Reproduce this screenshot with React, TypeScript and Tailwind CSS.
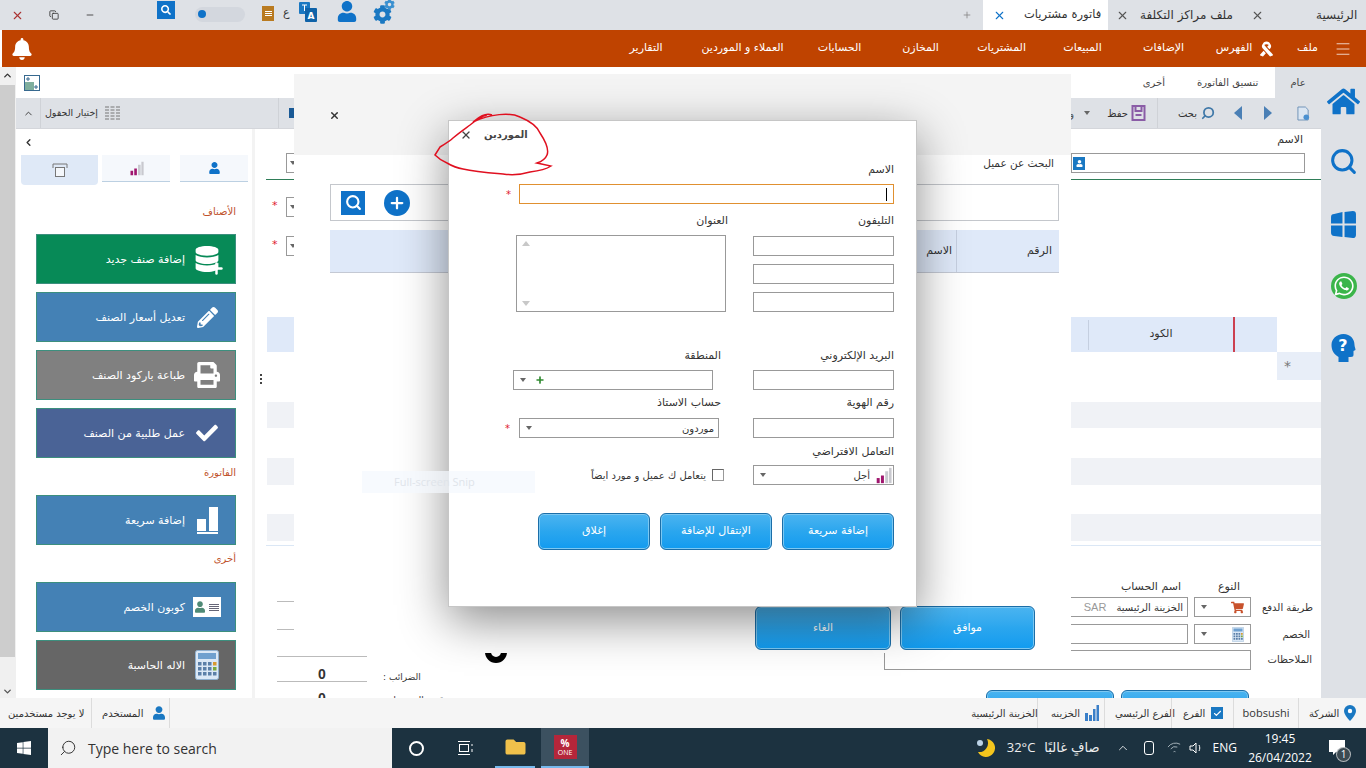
import { ReactNode } from 'react';
import { X, Plus, Menu, ChevronUp, ChevronDown, ChevronLeft, Search, Check, Copy, Minus } from 'lucide-react';
import { FaBell, FaCog, FaUser, FaHome, FaWhatsapp, FaDatabase, FaPencilAlt, FaPrint, FaCheck, FaWindows, FaRibbon, FaShoppingCart, FaSearch, FaFolder } from 'react-icons/fa';

const MENU = ['الفهرس', 'الإضافات', 'المبيعات', 'المشتريات', 'المخازن', 'الحسابات', 'العملاء و الموردين', 'التقارير'];

function Bars({ className = '' }: { className?: string }) {
  return (
    <svg viewBox="0 0 20 20" className={className}>
      <rect x="2" y="13" width="3.5" height="6" fill="#a0166e" />
      <rect x="7" y="10" width="3.5" height="9" fill="#a0166e" />
      <rect x="12" y="5" width="3.5" height="14" fill="#c9c9cf" />
      <rect x="16.5" y="1" width="3" height="18" fill="#c9c9cf" />
    </svg>
  );
}

function Calc({ className = '' }: { className?: string }) {
  return (
    <svg viewBox="0 0 24 30" className={className}>
      <rect x="0.5" y="0.5" width="23" height="29" rx="2" fill="#dbe8f6" stroke="#8fb0d0" />
      <rect x="3" y="3" width="18" height="6" fill="#6fa0cf" />
      {[12, 17, 22].map((y) => [3, 8, 13, 18].map((x) => (
        <rect key={`${x}-${y}`} x={x} y={y} width="3.5" height="3.5" fill={x === 18 && y === 12 ? '#d89a30' : x === 18 && y === 17 ? '#7aa83a' : '#5b7fa8'} />
      )))}
    </svg>
  );
}

function Caret() {
  return <span className="w-0 h-0 border-x-[3px] border-x-transparent border-t-[4px] border-t-[#666]" />;
}

function Lbl({ children, right = 0 }: { children: ReactNode; right?: number }) {
  return (
    <div className="flex justify-end h-[16px] items-center text-[11px] text-[#333] whitespace-nowrap" style={{ paddingRight: right }}>
      {children}
    </div>
  );
}

function Box({ className = '', children }: { className?: string; children?: ReactNode }) {
  return <div className={`h-[20px] border border-[#999] bg-white flex items-center ${className}`}>{children}</div>;
}

function BlueBtn({ label, className = '' }: { label: string; className?: string }) {
  return (
    <div className={`rounded-[6px] border border-[#1b6ea8] bg-gradient-to-b from-[#4ab4f0] via-[#2aa6ee] to-[#0f9bf0] shadow-[inset_0_0_0_1px_#7cc8f2] flex items-center justify-center text-white text-[11px] ${className}`}>
      {label}
    </div>
  );
}

function SideBtn({ label, color, icon }: { label: string; color: string; icon: ReactNode }) {
  return (
    <div className={`w-[200px] h-[50px] border border-[#3c8f7e] flex items-center justify-end gap-[7px] pr-[13px] text-white text-[11px] shrink-0 ${color}`}>
      <span className="whitespace-nowrap pt-[3px]">{label}</span>
      <span className="w-[30px] h-[30px] flex items-center justify-center">{icon}</span>
    </div>
  );
}

function SectionTitle({ children, className = '' }: { children: ReactNode; className?: string }) {
  return <div className={`w-[200px] text-right text-[10px] text-[#c0522a] ${className}`}>{children}</div>;
}

function TopBar() {
  return (
    <div className="h-[30px] bg-[#dee1e6] flex items-center shrink-0 relative">
      <X className="w-[13px] h-[13px] text-[#a33] ml-[11px]" />
      <Copy className="w-[10px] h-[10px] text-[#333] ml-[25px]" />
      <Minus className="w-[10px] h-[10px] text-[#333] ml-[26px]" />
      <span className="w-[18px] h-[18px] ml-[62px] -mt-[10px] bg-[#0f72c8] flex items-center justify-center">
        <FaSearch className="w-[10px] h-[10px] text-white" />
      </span>
      <span className="w-[50px] h-[15px] rounded-full bg-[#d3d7de] ml-[20px] flex items-center pl-[3px] -mt-[2px]">
        <span className="w-[8px] h-[8px] rounded-full bg-[#0f72c8]" />
      </span>
      <span className="w-[12px] h-[15px] bg-[#b97a20] ml-[17px] -mt-[4px] flex flex-col items-center justify-center gap-[1px]">
        <span className="w-[7px] h-px bg-white" />
        <span className="w-[7px] h-px bg-white" />
        <span className="w-[7px] h-px bg-white" />
      </span>
      <span className="text-[11px] text-[#333] ml-[9px] -mt-[4px]">ع</span>
      <svg viewBox="0 0 18 20" className="w-[18px] h-[20px] ml-[9px] -mt-[6px]">
        <rect x="0" y="0" width="11" height="12" rx="1" fill="#1a78c2" />
        <rect x="6" y="6" width="12" height="14" rx="1" fill="#0f62a8" />
        <path d="M3 3h5M5.5 3v6" stroke="#fff" />
        <text x="12" y="17" textAnchor="middle" fontSize="9" fontWeight="bold" fill="#fff">A</text>
      </svg>
      <FaUser className="w-[20px] h-[21px] text-[#0f72c8] ml-[20px] -mt-[8px]" />
      <span className="relative ml-[16px] -mt-[5px] w-[22px] h-[22px]">
        <FaCog className="w-[19px] h-[19px] text-[#1a78c2] absolute left-0 bottom-0" />
        <FaCog className="w-[11px] h-[11px] text-[#3a90d0] absolute right-0 -top-[3px]" />
      </span>
      <div className="ml-auto flex items-center h-full text-[12px] text-[#333]">
        <Plus className="w-[10px] h-[10px] text-[#888] mr-[11px]" />
        <div className="w-[125px] h-[30px] bg-white flex items-center pl-[10px]">
          <X className="w-[13px] h-[13px] text-[#0f72c8]" />
          <span className="ml-[18px] whitespace-nowrap text-[11.5px]">فاتورة مشتريات</span>
        </div>
        <X className="w-[13px] h-[13px] text-[#555] ml-[8px]" />
        <span className="ml-[8px] whitespace-nowrap w-[96px] text-right">ملف مراكز التكلفة</span>
        <X className="w-[13px] h-[13px] text-[#555] ml-[18px]" />
        <span className="ml-[52px] mr-[10px] whitespace-nowrap w-[40px] text-right">الرئيسية</span>
      </div>
    </div>
  );
}

function NavBar() {
  return (
    <div className="h-[37px] ml-[2px] bg-[#bf4300] flex items-center text-white text-[11px] shrink-0">
      <FaBell className="w-[20px] h-[22px] ml-[10px]" />
      <div dir="rtl" className="ml-auto flex items-center">
        <Menu strokeWidth={1} className="w-[18px] h-[18px] mr-[14px]" />
        <span className="mr-[16px]">ملف</span>
        <FaRibbon className="w-[13px] h-[16px] mr-[24px]" />
        {MENU.map((m, i) => (
          <span key={m} className={`whitespace-nowrap text-center ${i === 0 ? 'w-[60px] mr-[-4px]' : i === 6 ? 'w-[113px]' : i === 7 ? 'w-[80px]' : 'w-[81px]'}`}>
            {m}
          </span>
        ))}
        <span className="w-[26px]" />
      </div>
    </div>
  );
}

function RibbonRows() {
  return (
    <>
      <div className="h-[31px] bg-white flex items-center shrink-0 text-[10px] text-[#444]">
        <svg viewBox="0 0 16 16" className="w-[16px] h-[16px] ml-[8px]">
          <rect x="0.5" y="0.5" width="15" height="15" fill="#fff" stroke="#37698f" />
          <rect x="1" y="7" width="9" height="8" fill="#7fae9d" />
          <path d="M4 2v4M2 4h4M12 10v4M10 12h4" stroke="#37698f" />
        </svg>
        <div className="ml-auto flex items-center h-full">
          <span className="mr-[32px]">أخرى</span>
          <span className="mr-[18px] w-[60px] text-center whitespace-nowrap">تنسيق الفاتورة</span>
          <span className="w-[46px] h-full bg-[#dee1e6] flex items-center justify-center">عام</span>
        </div>
      </div>
      <div className="h-[31px] bg-[#dee1e6] border-b border-[#d4d6db] flex items-center shrink-0 text-[10px] text-[#333]">
        <div className="w-[25px] h-full border-r border-[#cfd2d7] flex items-center justify-center">
          <ChevronUp className="w-[11px] h-[11px]" />
        </div>
        <span className="ml-[9px] w-[48px] text-[9.5px] flex justify-end whitespace-nowrap">إختيار الحقول</span>
        <svg viewBox="0 0 15 14" className="ml-[7px] w-[15px] h-[14px]" stroke="#777">
          {[1, 4, 7, 10, 13].map((y) => <path key={y} d="M0 0h4M5.5 0h4M11 0h4" transform={`translate(0 ${y})`} />)}
        </svg>
        <div className="ml-[158px] w-px h-full bg-[#cfd2d7]" />
        <span className="ml-[10px] w-[5px] h-[10px] bg-[#1a5a96]" />
        <div className="ml-auto flex items-center h-full">
          <span className="mr-[10px] text-[#555]">و</span>
          <Caret />
          <span className="ml-[17px] whitespace-nowrap">حفظ</span>
          <svg viewBox="0 0 14 16" className="ml-[3px] w-[15px] h-[16px]" fill="none" stroke="#8a5ca6" strokeWidth="2">
            <path d="M1 1h12v14H1zM4 1v5h6V1M4 10h6" />
          </svg>
          <div className="ml-[11px] w-px h-full bg-[#cfd2d7]" />
          <span className="ml-[20px] whitespace-nowrap">بحث</span>
          <Search className="w-[14px] h-[14px] text-[#3f78a8] -scale-x-100 ml-[4px]" strokeWidth={3} />
          <span className="ml-[19px] w-0 h-0 border-y-[7px] border-y-transparent border-r-[8px] border-r-[#4a7fb5]" />
          <span className="ml-[22px] w-0 h-0 border-y-[7px] border-y-transparent border-l-[8px] border-l-[#4a7fb5]" />
          <svg viewBox="0 0 14 16" className="w-[13px] h-[15px] ml-[25px] mr-[11px]">
            <path d="M1 1h8l3 3v11H1z" fill="#dbe6f2" stroke="#6a8fb5" />
            <circle cx="10" cy="12" r="3" fill="#4a90d0" />
          </svg>
        </div>
      </div>
    </>
  );
}

function SidePanel() {
  return (
    <div className="w-[239px] h-full shrink-0 bg-[#f3f3f3] pr-[3px] overflow-hidden">
      <div className="h-full bg-white pl-[4px] pr-[1px] flex flex-col">
        <div className="h-[26px] flex items-center pl-[3px] shrink-0">
          <ChevronLeft className="w-[11px] h-[11px] text-[#333]" strokeWidth={3} />
        </div>
        <div className="flex shrink-0 h-[30px] items-start pl-[1px]">
          <div className="w-[77px] h-[30px] bg-[#dfe9f7] rounded-b-[4px] flex items-center justify-center">
            <svg viewBox="0 0 16 14" className="w-[16px] h-[14px]" fill="none" stroke="#777">
              <path d="M1 5V1h14v4" />
              <rect x="3.5" y="4.5" width="9" height="9" fill="#f4f7fb" />
            </svg>
          </div>
          <div className="w-[68px] h-[27px] ml-[4px] bg-[#f5f8fc] border-b border-[#bcd0e2] flex items-center justify-center">
            <Bars className="w-[15px] h-[15px]" />
          </div>
          <div className="w-[68px] h-[27px] ml-[10px] bg-[#f5f8fc] border-b border-[#bcd0e2] flex items-center justify-center">
            <FaUser className="w-[11px] h-[12px] text-[#0f72c8]" />
          </div>
        </div>
        <div className="pl-[16px] flex flex-col">
          <SectionTitle className="mt-[19px] mb-[15px]">الأصناف</SectionTitle>
          <div className="flex flex-col gap-[8px]">
            <SideBtn label="إضافة صنف جديد" color="bg-[#078a57]" icon={
              <span className="relative">
                <FaDatabase className="w-[24px] h-[26px]" />
                <Plus className="absolute -right-[6px] -bottom-[5px] w-[17px] h-[17px]" strokeWidth={3.5} />
              </span>
            } />
            <SideBtn label="تعديل أسعار الصنف" color="bg-[#4481b5]" icon={<FaPencilAlt className="w-[21px] h-[21px]" />} />
            <SideBtn label="طباعة باركود الصنف" color="bg-[#808080]" icon={<FaPrint className="w-[28px] h-[26px]" />} />
            <SideBtn label="عمل طلبية من الصنف" color="bg-[#4a6396]" icon={<FaCheck className="w-[26px] h-[22px]" />} />
          </div>
          <SectionTitle className="mt-[7px] mb-[15px]">الفاتورة</SectionTitle>
          <SideBtn label="إضافة سريعة" color="bg-[#4481b5]" icon={
            <span className="flex items-end gap-[3px] border-b-2 border-white pb-[1px]">
              <span className="w-[9px] h-[12px] bg-white" />
              <span className="w-[9px] h-[24px] bg-white" />
            </span>
          } />
          <SectionTitle className="mt-[6px] mb-[16px]">أخرى</SectionTitle>
          <div className="flex flex-col gap-[8px]">
            <SideBtn label="كوبون الخصم" color="bg-[#4481b5]" icon={
              <span className="w-[28px] h-[20px] bg-white flex items-center justify-between px-[2px]">
                <FaUser className="w-[10px] h-[12px] text-[#4f8a76]" />
                <span className="w-[10px] flex flex-col gap-[1px]"><span className="h-px bg-[#667]" /><span className="h-px bg-[#667]" /><span className="h-px bg-[#667]" /><span className="h-px bg-[#667]" /></span>
              </span>
            } />
            <SideBtn label="الاله الحاسبة" color="bg-[#666666]" icon={<Calc className="w-[24px] h-[30px]" />} />
            <SideBtn label="" color="bg-[#078a57]" icon={null} />
          </div>
        </div>
      </div>
    </div>
  );
}

function MainArea() {
  return (
    <div className="flex-1 min-w-0 h-full overflow-hidden flex flex-col text-[11px] text-[#333]">
      <div className="h-[51px] border-b border-[#2f7d58] shrink-0 pr-[16px] pl-[20px] flex items-end justify-between">
        <Box className="w-[30px] h-[19px] pl-[3px] mb-[6px]"><Caret /></Box>
        <div className="flex flex-col items-end">
          <div className="h-[26px] flex items-center pr-[2px] tracking-wide">الاسم</div>
          <Box className="w-[234px] h-[18px] mb-[6px] pl-0">
            <span className="w-[12px] h-[13px] bg-[#1a78c2] flex items-center justify-center ml-px"><FaUser className="w-[7px] h-[7px] text-white" /></span>
          </Box>
        </div>
      </div>
      <div className="flex items-center mt-[17px] h-[19px] shrink-0 pl-[6px]">
        <span className="text-[#e02030] text-[11px]">*</span>
        <Box className="ml-[8px] w-[30px] h-[19px] pl-[3px]"><Caret /></Box>
      </div>
      <div className="flex items-center mt-[20px] h-[19px] shrink-0 pl-[6px]">
        <span className="text-[#e02030] text-[11px]">*</span>
        <Box className="ml-[8px] w-[30px] h-[19px] pl-[3px]"><Caret /></Box>
      </div>
      <div className="mt-[62px] h-[35px] w-[1010px] ml-px shrink-0 bg-[#dfe9f9] flex items-center">
        <span className="flex-1" />
        <span className="w-px h-[30px] bg-[#c5cfe0]" />
        <span className="w-[144px] text-center whitespace-nowrap">الكود</span>
        <span className="w-[2px] h-full bg-[#cc4050] mr-[42px]" />
      </div>
      <div className="h-[28px] flex justify-end shrink-0">
        <span className="w-[44px] bg-[#e8eef8] flex items-center pl-[7px] text-[#777] text-[14px]">*</span>
      </div>
      <div className="mt-[22px] h-[26px] ml-px bg-[#f0f2f6] shrink-0" />
      <div className="mt-[30px] h-[27px] ml-px bg-[#f0f2f6] shrink-0" />
      <div className="mt-[29px] h-[27px] ml-px bg-[#f0f2f6] shrink-0" />
      <div className="mt-[4px] h-px bg-[#dbe7f5] shrink-0" />
      <div className="flex shrink-0 justify-between">
        <div className="flex">
          <div className="ml-[11px] w-[90px] pt-[29px] text-center font-bold text-[14px] font-['Liberation_Sans',sans-serif]">
            <div className="h-[27px] border-b border-[#bbb]" />
            <div className="h-[28px] border-b border-[#bbb]" />
            <div className="h-[27px] border-b border-[#bbb]" />
            <div className="h-[25px] border-b border-[#bbb] pt-[10px] leading-none">0</div>
            <div className="h-[20px] pt-[9px] leading-none">0</div>
          </div>
          <div className="ml-[16px] w-[60px] mt-[125px] text-[9px] whitespace-nowrap flex flex-col items-start">
            <span dir="rtl">الضرائب :</span>
            <span dir="rtl" className="mt-[9px] ml-[9px]">قيمة التقسيط</span>
          </div>
          <div className="ml-[42px] mt-[95px] w-[22px] h-[22px] rounded-full border-[6px] border-black" />
        </div>
        <div className="pr-[9px]">
          <div className="flex h-[16px] mt-[33px] pr-[72px] gap-[37px] text-[11px] justify-end tracking-wide">
            <span>اسم الحساب</span>
            <span>النوع</span>
          </div>
          <div className="flex justify-end items-center mt-[2px] h-[20px] gap-[6px]">
            <Box className="w-[150px] h-[20px] justify-end gap-[10px] pr-[4px] text-[10px]"><span className="text-[#999] font-['Liberation_Sans',sans-serif] text-[11px]">SAR</span><span className="whitespace-nowrap">الخزينة الرئيسية</span></Box>
            <div className="flex items-center gap-[11px]">
              <Box className="w-[57px] h-[20px] justify-between px-[6px]"><Caret /><FaShoppingCart className="w-[13px] h-[13px] text-[#c8522c]" /></Box>
              <span className="w-[50px] text-right text-[10px] whitespace-nowrap">طريقة الدفع</span>
            </div>
          </div>
          <div className="flex justify-end items-center mt-[7px] h-[20px] gap-[6px]">
            <Box className="w-[150px] h-[20px]" />
            <div className="flex items-center gap-[11px]">
              <Box className="w-[57px] h-[20px] justify-between px-[6px]"><Caret /><Calc className="w-[12px] h-[15px]" /></Box>
              <span className="w-[50px] text-right text-[10px] whitespace-nowrap pr-[2px]">الخصم</span>
            </div>
          </div>
          <div className="flex justify-end items-center mt-[6px] h-[19px] gap-[11px]">
            <Box className="w-[367px] h-[19px]" />
            <span className="w-[50px] text-right text-[10px] whitespace-nowrap">الملاحظات</span>
          </div>
          <div className="flex justify-end gap-[7px] mt-[21px] pr-[63px]">
            <BlueBtn label="" className="w-[128px] h-[30px]" />
            <BlueBtn label="" className="w-[128px] h-[30px]" />
          </div>
        </div>
      </div>
    </div>
  );
}

function Rail() {
  return (
    <div className="w-[45px] shrink-0 h-full bg-[#dee1e6] flex flex-col items-center pt-[19px]">
      <FaHome className="w-[33px] h-[31px] text-[#0f72c8]" />
      <Search className="w-[29px] h-[29px] text-[#0f72c8] mt-[30px]" strokeWidth={2.5} />
      <svg viewBox="0 0 24 26" className="w-[25px] h-[27px] mt-[35px] fill-[#0f72c8]">
        <path d="M0 6c0-2 1-3 3-3l8-2v11H0zM13 1l8-1c2 0 3 1 3 3v9H13zM0 14h11v11l-8-1c-2 0-3-1-3-3zM13 14h11v9c0 2-1 3-3 3l-8-1z" />
      </svg>
      <span className="w-[26px] h-[26px] mt-[35px] rounded-full bg-[#3bb54a] flex items-center justify-center">
        <FaWhatsapp className="w-[22px] h-[22px] text-white" />
      </span>
      <svg viewBox="0 0 24 28" className="w-[25px] h-[28px] mt-[35px]">
        <path d="M12 0c7 0 11 5 11 11 0 2 1 3 1 5l-2 1v4c0 2-2 2-5 2v5H7v-5C2 20 0 16 0 11 0 5 5 0 12 0z" fill="#0f72c8" />
        <text x="11.5" y="17" textAnchor="middle" fontSize="16" fontWeight="bold" fill="#fff">?</text>
      </svg>
    </div>
  );
}

function StatusItem({ children, className = '' }: { children: ReactNode; className?: string }) {
  return <div className={`h-full flex items-center gap-[5px] border-l border-[#dcdcdc] whitespace-nowrap ${className}`}>{children}</div>;
}

function StatusBar() {
  return (
    <div className="h-[30px] shrink-0 bg-[#f5f5f5] flex items-center text-[10px] text-[#333]">
      <span className="ml-[8px] w-[83px] whitespace-nowrap">لا يوجد مستخدمين</span>
      <StatusItem className="w-[79px] border-r pl-[10px]">
        المستخدم
        <FaUser className="w-[12px] h-[14px] text-[#1a78c2] ml-[5px]" />
      </StatusItem>
      <div className="ml-auto flex items-center h-full">
        <StatusItem className="w-[66px] justify-center border-l-0 border-r">الخزينة الرئيسية</StatusItem>
        <StatusItem className="pl-[13px] w-[66px] border-l-0">
          الخزينه
          <svg viewBox="0 0 14 16" className="w-[14px] h-[16px] fill-[#3a7fc8]">
            <rect x="0" y="8" width="3" height="8" /><rect x="4" y="10" width="3" height="6" /><rect x="8" y="4" width="2.5" height="12" /><rect x="11.5" y="0" width="2.5" height="16" />
          </svg>
        </StatusItem>
        <StatusItem className="w-[67px] pl-[10px]">الفرع الرئيسي</StatusItem>
        <StatusItem className="w-[59px] pl-[11px] gap-[6px]">
          الفرع
          <span className="w-[12px] h-[12px] bg-[#1a78c2] flex items-center justify-center"><Check className="w-[9px] h-[9px] text-white" strokeWidth={3} /></span>
        </StatusItem>
        <StatusItem className="w-[65px] justify-center text-[11px] font-['Open_Sans',sans-serif] ml-[3px]">bobsushi</StatusItem>
        <StatusItem className="w-[68px] pl-[10px]">
          الشركة
          <svg viewBox="0 0 12 16" className="w-[12px] h-[16px]">
            <path d="M6 0a6 6 0 0 1 6 6c0 4-6 10-6 10S0 10 0 6a6 6 0 0 1 6-6z" fill="#1a78c2" />
            <circle cx="6" cy="6" r="2.2" fill="#fff" />
          </svg>
        </StatusItem>
      </div>
    </div>
  );
}

function TaskBar() {
  return (
    <div className="h-[40px] shrink-0 bg-[#1c3240] flex items-center text-white font-['Open_Sans',sans-serif]">
      <FaWindows className="w-[16px] h-[16px] ml-[16px]" />
      <div className="ml-[16px] w-[344px] h-full bg-[#f2f2f2] flex items-center text-[#333] text-[14px]">
        <Search className="w-[18px] h-[18px] ml-[11px] -scale-x-100" strokeWidth={1.3} />
        <span className="ml-[11px]">Type here to search</span>
      </div>
      <span className="ml-[17px] w-[15px] h-[15px] rounded-full border-2 border-white" />
      <svg viewBox="0 0 16 16" className="w-[16px] h-[16px] ml-[33px]" fill="none" stroke="#fff">
        <rect x="2.5" y="4.5" width="9" height="7" /><path d="M1 1.5h12M1 14.5h12M15 4v2M15 9v3" />
      </svg>
      <div className="ml-[22px] w-[40px] h-full border-b-2 border-[#76b9ed] flex items-center justify-center">
        <FaFolder className="w-[21px] h-[20px] text-[#f0c14b]" />
      </div>
      <div className="ml-[6px] w-[48px] h-full bg-[#3c5160] border-b-2 border-[#76b9ed] flex items-center justify-center">
        <span className="w-[23px] h-[24px] bg-[#b5263a] flex flex-col items-center justify-center text-[7px] leading-[8px]">
          <span className="text-[10px] font-bold leading-[11px]">%</span>ONE
        </span>
      </div>
      <div className="ml-auto flex items-center h-full">
        <svg viewBox="0 0 20 20" className="w-[20px] h-[20px]">
          <path d="M12 1a9 9 0 1 1-9 13A9 9 0 0 0 12 1z" fill="#f4c51d" />
          <circle cx="5" cy="5" r="3" fill="#bcd3e6" />
        </svg>
        <span className="ml-[12px] text-[13px] text-[#eee] whitespace-nowrap">32°C</span>
        <span className="ml-[9px] text-[13px] text-[#eee] whitespace-nowrap tracking-wide font-['DejaVu_Sans',sans-serif]">صافٍ غالبًا</span>
        <ChevronUp className="w-[14px] h-[14px] ml-[16px]" strokeWidth={1.4} />
        <span className="ml-[14px] w-[10px] h-[14px] border border-white rounded-[3px]" />
        <svg viewBox="0 0 16 14" className="w-[15px] h-[14px] ml-[13px]" fill="none" stroke="#aab6be">
          <path d="M1 6a10 10 0 0 1 13-3M4 8a6 6 0 0 1 7-2M7 11a2 2 0 0 1 2 0" />
        </svg>
        <svg viewBox="0 0 14 14" className="w-[14px] h-[14px] ml-[7px]" fill="none" stroke="#fff">
          <path d="M1 5h3l3-3v10l-3-3H1zM10 4c1 2 1 4 0 6" />
        </svg>
        <span className="ml-[10px] text-[12px]">ENG</span>
        <div className="ml-[10px] w-[66px] text-center text-[12px] leading-[19px]">
          <div>19:45</div>
          <div>26/04/2022</div>
        </div>
        <div className="relative ml-[16px] mr-[21px]">
          <svg viewBox="0 0 16 16" className="w-[16px] h-[16px] fill-white"><path d="M0 0h16v12H7l-3 3v-3H0z" /></svg>
          <span className="absolute left-[7px] top-[7px] w-[15px] h-[15px] rounded-full bg-[#3c4a52] border border-white/60 text-[10px] leading-[13px] text-center">1</span>
        </div>
      </div>
    </div>
  );
}

function CustomerDialog() {
  return (
    <div className="absolute left-[294px] top-[74px] w-[777px] h-[579px] bg-white flex flex-col text-[11px] text-[#333]">
      <div className="h-[81px] bg-[#f4f4f4] shrink-0 pl-[35px] pt-[36px]">
        <X className="w-[11px] h-[11px] text-[#333]" strokeWidth={3} />
      </div>
      <div className="text-[10.5px] text-right pr-[17px] h-[29px] pt-[1px] shrink-0">البحث عن عميل</div>
      <div className="ml-[36px] w-[729px] h-[37px] border border-[#c4c7cc] flex items-center pl-[10px] shrink-0">
        <span className="w-[24px] h-[24px] bg-[#0f72c8] flex items-center justify-center">
          <Search className="w-[17px] h-[17px] text-white" strokeWidth={3} />
        </span>
        <span className="ml-[19px] w-[26px] h-[26px] rounded-full bg-[#0f72c8] flex items-center justify-center">
          <Plus className="w-[18px] h-[18px] text-white" strokeWidth={3} />
        </span>
      </div>
      <div className="ml-[36px] mt-[9px] w-[729px] h-[43px] bg-[#dfe9f9] border-b border-[#c4c9d4] flex items-center justify-end shrink-0">
        <span className="w-[103px] h-full border-l border-[#c5cfe0] flex items-center justify-end pr-[7px]" style={{ order: 2 }}>الرقم</span>
        <span className="pr-[4px]" style={{ order: 1 }}>الاسم</span>
      </div>
      <div className="flex justify-end gap-[9px] mt-[333px] pr-[36px]">
        <BlueBtn label="الغاء" className="w-[136px] h-[44px]" />
        <BlueBtn label="موافق" className="w-[135px] h-[44px]" />
      </div>
    </div>
  );
}

function SupplierDialog() {
  return (
    <div className="absolute left-[448px] top-[120px] w-[469px] h-[487px] bg-white border border-[#c6c6c6] shadow-[0_14px_45px_rgba(0,0,0,0.45)] pr-[22px] text-[11px] text-[#333]">
      <div className="h-[27px] -mr-[22px] flex items-center pl-[11px]">
        <X className="w-[12px] h-[12px] text-[#444]" strokeWidth={2.5} />
        <span className="ml-[12px] font-bold text-[10px] text-[#444] whitespace-nowrap">الموردين</span>
      </div>
      <div className="mt-[14px]"><Lbl>الاسم</Lbl></div>
      <div className="flex justify-end items-center mt-[6px] gap-[8px]">
        <span className="text-[#e02030] text-[10px]">*</span>
        <div className="w-[375px] h-[20px] border border-[#e09030] flex justify-end items-center pr-[6px]">
          <span className="w-px h-[13px] bg-black" />
        </div>
      </div>
      <div className="flex justify-end mt-[9px] gap-[36px]">
        <Lbl>العنوان</Lbl>
        <div className="w-[130px]"><Lbl>التليفون</Lbl></div>
      </div>
      <div className="flex justify-end mt-[6px] gap-[27px]">
        <div className="w-[210px] h-[77px] border border-[#999] flex flex-col justify-between py-[5px] pl-[5px]">
          <span className="w-0 h-0 border-x-[4px] border-x-transparent border-b-[5px] border-b-[#c8c8c8]" />
          <span className="w-0 h-0 border-x-[4px] border-x-transparent border-t-[5px] border-t-[#c8c8c8]" />
        </div>
        <div className="w-[141px] flex flex-col gap-[8px] pt-px">
          <Box />
          <Box />
          <Box />
        </div>
      </div>
      <div className="flex justify-end mt-[36px] gap-[33px]">
        <Lbl>المنطقة</Lbl>
        <div className="w-[140px]"><Lbl>البريد الإلكتروني</Lbl></div>
      </div>
      <div className="flex justify-end mt-[6px] gap-[40px]">
        <Box className="w-[200px] pl-[6px] gap-[9px]">
          <Caret />
          <Plus className="w-[10px] h-[10px] text-[#2f8a2f]" strokeWidth={4} />
        </Box>
        <Box className="w-[141px]" />
      </div>
      <div className="flex justify-end mt-[5px] gap-[33px]">
        <Lbl>حساب الاستاذ</Lbl>
        <div className="w-[140px]"><Lbl>رقم الهوية</Lbl></div>
      </div>
      <div className="flex justify-end items-center mt-[7px] gap-[34px]">
        <span className="text-[#e02030] text-[10px] mr-[-31px]">*</span>
        <Box className="w-[200px] justify-between pl-[6px] pr-[4px] ml-[6px] text-[10px]">
          <Caret />
          موردون
        </Box>
        <Box className="w-[141px]" />
      </div>
      <div className="flex justify-end mt-[6px]"><Lbl>التعامل الافتراضي</Lbl></div>
      <div className="flex justify-end items-center mt-[5px] gap-[29px]">
        <div className="flex items-center gap-[6px] text-[10px]">
          <span className="whitespace-nowrap">يتعامل ك عميل و مورد ايضاً</span>
          <span className="w-[12px] h-[12px] border border-[#999] border-t-[#666] border-l-[#666] bg-white" />
        </div>
        <Box className="w-[141px] justify-between pl-[6px] pr-[1px] text-[10px]">
          <Caret />
          <span className="flex items-center gap-[5px]">أجل<Bars className="w-[17px] h-[17px]" /></span>
        </Box>
      </div>
      <div className="flex justify-end gap-[10px] mt-[28px]">
        <BlueBtn label="إغلاق" className="w-[112px] h-[37px]" />
        <BlueBtn label="الإنتقال للإضافة" className="w-[112px] h-[37px]" />
        <BlueBtn label="إضافة سريعة" className="w-[112px] h-[37px]" />
      </div>
    </div>
  );
}

export default function App() {
  return (
    <div className="relative w-[1366px] h-[768px] overflow-hidden bg-white flex flex-col font-['DejaVu_Sans',sans-serif]">
      <TopBar />
      <NavBar />
      <div className="flex h-[631px] shrink-0">
        <div className="w-[16px] h-full bg-[#f0f0f0] flex flex-col items-center shrink-0 pr-px">
          <ChevronUp className="w-[11px] h-[11px] text-[#333] mt-[3px]" strokeWidth={3} />
          <div className="w-[15px] h-[572px] bg-[#cdcdcd] mt-[4px]" />
          <ChevronDown className="w-[11px] h-[11px] text-[#555] mt-auto mb-[1px]" strokeWidth={3} />
        </div>
        <div className="flex-1 min-w-0 flex flex-col">
          <RibbonRows />
          <div className="flex h-[569px]">
            <SidePanel />
            <div className="w-[11px] h-full shrink-0 flex flex-col items-center justify-center gap-[2px] pb-[70px]">
              <span className="w-[2px] h-[2px] bg-[#444]" /><span className="w-[2px] h-[2px] bg-[#444]" /><span className="w-[2px] h-[2px] bg-[#444]" />
            </div>
            <MainArea />
          </div>
        </div>
        <Rail />
      </div>
      <StatusBar />
      <TaskBar />
      <CustomerDialog />
      <SupplierDialog />
      <div className="absolute left-[362px] top-[471px] w-[173px] h-[22px] bg-[#f3f8fd]/70 text-[#dfe4ea] text-[11px] flex items-center pl-[32px] font-['Open_Sans',sans-serif]">Full-screen Snip</div>
      <svg className="absolute left-0 top-0 w-[1366px] h-[768px] pointer-events-none" viewBox="0 0 1366 768" fill="none">
        <path d="M492 115 C485 112 478 118 473 122 C490 114 510 112 520 117 C532 122 538 128 540 133 C546 142 549 150 547 155 C545 160 540 162 537 163 L551 166 C545 170 538 171 530 172 C520 175 510 175 503 174 C490 173 475 172 463 169 C456 168 452 166 447 163 C442 161 438 158 435 155 L440 147 C445 144 450 141 453 138 C460 132 466 128 470 125 C476 120 482 116 487 115" stroke="#e01020" strokeWidth="1.5" />
      </svg>
    </div>
  );
}
